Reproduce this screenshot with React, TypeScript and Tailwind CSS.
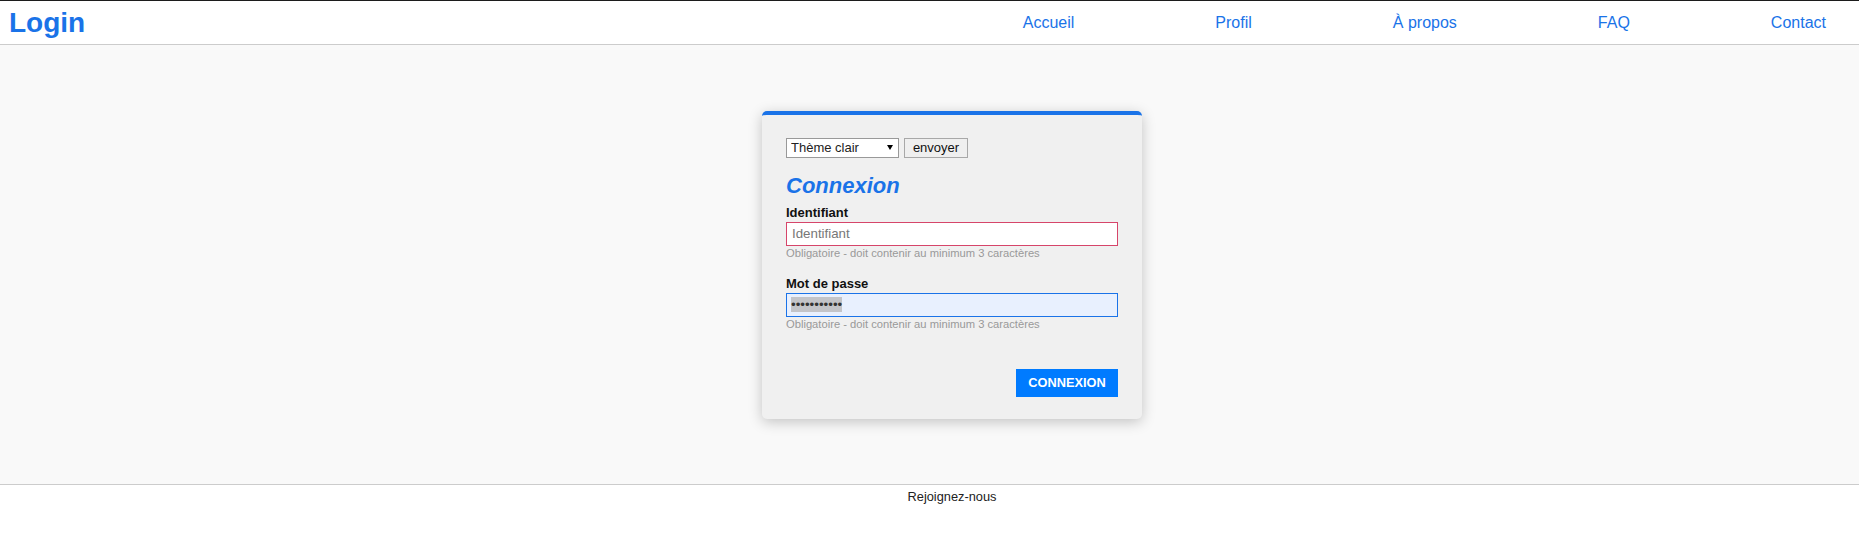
import { useState } from "react";

const navLinks = ["Accueil", "Profil", "À propos", "FAQ", "Contact"];

function Header() {
  return (
    <header className="flex h-[45px] items-center justify-between border-t border-b border-t-[#1c1c1c] border-b-[#cccccc] bg-white">
      <h1 className="pl-[9px] text-[28px] font-bold leading-[32px] text-[#1a73e8]">Login</h1>
      <nav className="flex gap-[141px] pr-[33px]">
        {navLinks.map((l) => (
          <a key={l} href="#" className="text-[16px] leading-[18px] text-[#1a73e8]">
            {l}
          </a>
        ))}
      </nav>
    </header>
  );
}

function LoginCard() {
  const [user, setUser] = useState("");

  return (
    <div className="w-[380px] rounded-[5px] border-t-4 border-[#1a73e8] bg-[#f0f0f0] px-[24px] pt-[23px] pb-[22px] shadow-[0_3px_14px_rgba(0,0,0,0.22)]">
      {/* theme selector */}
      <div className="flex gap-[5px]">
        <div className="relative h-[20px] w-[113px]">
          <select className="box-border block h-[20px] w-full appearance-none border border-[#999] bg-white py-0 pl-[4px] text-[13px] leading-[18px] text-[#222]">
            <option>Thème clair</option>
            <option>Thème sombre</option>
          </select>
          <svg className="pointer-events-none absolute top-[7px] right-[6px]" width="6" height="5" viewBox="0 0 6 5">
            <polygon points="0,0 6,0 3,5" fill="#000" />
          </svg>
        </div>
        <button className="h-[20px] w-[64px] border border-[#a8a8a8] bg-[#efefef] text-[13px] leading-[18px] text-[#111]">
          envoyer
        </button>
      </div>

      <h2 className="mt-[15px] text-[22px] font-bold italic leading-[25px] text-[#1a73e8]">Connexion</h2>

      <label className="mt-[7px] block text-[13px] font-bold leading-[15px] text-[#111]">Identifiant</label>
      <input
        value={user}
        onChange={(e) => setUser(e.target.value)}
        placeholder="Identifiant"
        className="mt-[2px] block h-[24px] w-full border border-[#d6456a] bg-white px-[5px] text-[13.3px] text-[#222] outline-none placeholder:text-[#777]"
      />
      <p className="mt-[1px] text-[11.2px] leading-[13px] text-[#999]">Obligatoire - doit contenir au minimum 3 caractères</p>

      <label className="mt-[16px] block text-[13px] font-bold leading-[15px] text-[#111]">Mot de passe</label>
      <div className="mt-[2px] flex h-[24px] w-full items-center border border-[#1a73e8] bg-[#e8f0fe] px-[4px]">
        <span className="bg-[#c3c4c8] text-[13.3px] leading-[15px] text-[#333]">•••••••••••</span>
      </div>
      <p className="mt-[1px] text-[11.2px] leading-[13px] text-[#999]">Obligatoire - doit contenir au minimum 3 caractères</p>

      <div className="mt-[38px] flex justify-end">
        <button className="h-[28px] w-[102px] bg-[#007bff] text-[12.8px] font-bold uppercase text-white">Connexion</button>
      </div>
    </div>
  );
}

export default function App() {
  return (
    <div className="min-h-[539px] bg-white font-['Liberation_Sans',Arial,sans-serif]">
      <Header />
      <main className="flex h-[439px] items-center justify-center bg-[#f9f9f9] pl-[45px]">
        <LoginCard />
      </main>
      <footer className="border-t border-[#cccccc] bg-white pt-[4px] pl-[45px] text-center text-[12.8px] leading-[15px] text-[#222]">
        Rejoignez-nous
      </footer>
    </div>
  );
}
